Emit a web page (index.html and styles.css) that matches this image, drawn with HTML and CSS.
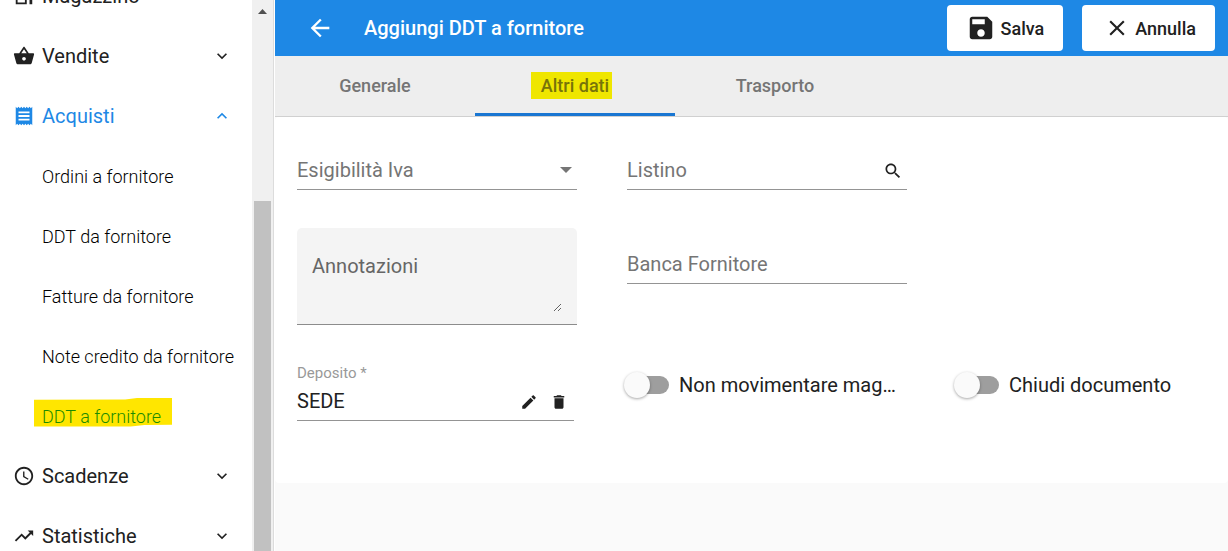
FILE: index.html
```
<!DOCTYPE html>
<html lang="it">
<head>
    <meta charset="UTF-8">
    <meta name="viewport" content="width=device-width, initial-scale=1.0">
    <title>Aggiungi DDT a fornitore</title>
    <link rel="stylesheet" href="styles.css">
</head>
<body>
    <aside class="sidebar">
        <nav class="menu">
            <a href="#" class="menu-item">
                <svg class="icon" viewBox="0 0 24 24"><path d="M3 3h12v18H3zM18 12h3v9h-3zM5 5v14h8V5z" fill-rule="evenodd"/></svg>
                <span>Magazzino</span>
            </a>
            <a href="#" class="menu-item">
                <svg class="icon" viewBox="0 0 24 24"><path d="M17.21 9l-4.38-6.56c-.19-.28-.51-.42-.83-.42-.32 0-.64.14-.83.43L6.79 9H2c-.55 0-1 .45-1 1 0 .09.01.18.04.27l2.54 9.27c.23.84 1 1.46 1.92 1.46h13c.92 0 1.69-.62 1.93-1.46l2.54-9.27L23 10c0-.55-.45-1-1-1h-4.79zM9 9l3-4.4L15 9H9zm3 8c-1.1 0-2-.9-2-2s.9-2 2-2 2 .9 2 2-.9 2-2 2z"/></svg>
                <span>Vendite</span>
                <svg class="chevron" viewBox="0 0 24 24"><path d="M7.41 8.59L12 13.17l4.59-4.58L18 10l-6 6-6-6z"/></svg>
            </a>
            <a href="#" class="menu-item open">
                <svg class="icon" viewBox="0 0 24 24"><path d="M18 17H6v-2h12v2zm0-4H6v-2h12v2zm0-4H6V7h12v2zM3 22l1.500-1.500L6 22l1.500-1.500L9 22l1.500-1.500L12 22l1.500-1.500L15 22l1.500-1.500L18 22l1.500-1.500L21 22V2l-1.500 1.500L18 2l-1.500 1.500L15 2l-1.500 1.500L12 2l-1.500 1.500L9 2 7.500 3.500 6 2 4.500 3.500 3 2v20z"/></svg>
                <span>Acquisti</span>
                <svg class="chevron" viewBox="0 0 24 24"><path d="M7.41 15.41L12 10.83l4.59 4.58L18 14l-6-6-6 6z"/></svg>
            </a>
            <a href="#" class="menu-item sub">Ordini a fornitore</a>
            <a href="#" class="menu-item sub">DDT da fornitore</a>
            <a href="#" class="menu-item sub">Fatture da fornitore</a>
            <a href="#" class="menu-item sub">Note credito da fornitore</a>
            <a href="#" class="menu-item sub current"><span class="marker">DDT a fornitore</span></a>
            <a href="#" class="menu-item">
                <svg class="icon" viewBox="0 0 24 24"><path d="M11.990 2C6.470 2 2 6.480 2 12s4.470 10 9.990 10C17.520 22 22 17.520 22 12S17.520 2 11.990 2zM12 20c-4.420 0-8-3.580-8-8s3.580-8 8-8 8 3.580 8 8-3.580 8-8 8zm.5-13H11v6l5.250 3.150.75-1.230-4.500-2.670z"/></svg>
                <span>Scadenze</span>
                <svg class="chevron" viewBox="0 0 24 24"><path d="M7.41 8.59L12 13.17l4.59-4.58L18 10l-6 6-6-6z"/></svg>
            </a>
            <a href="#" class="menu-item">
                <svg class="icon" viewBox="0 0 24 24"><path d="M16 6l2.290 2.290-4.880 4.880-4-4L2 16.590 3.410 18l6-6 4 4 6.300-6.290L22 12V6z"/></svg>
                <span>Statistiche</span>
                <svg class="chevron" viewBox="0 0 24 24"><path d="M7.41 8.59L12 13.17l4.59-4.58L18 10l-6 6-6-6z"/></svg>
            </a>
        </nav>
        <div class="scrollbar">
            <div class="scroll-arrow"></div>
            <div class="scroll-thumb"></div>
        </div>
    </aside>

    <main class="content">
        <header class="toolbar">
            <button type="button" class="back" aria-label="Indietro">
                <svg viewBox="0 0 24 24"><path d="M20 11H7.830l5.590-5.590L12 4l-8 8 8 8 1.410-1.410L7.830 13H20v-2z"/></svg>
            </button>
            <h1>Aggiungi DDT a fornitore</h1>
            <button type="button" class="action save">
                <svg viewBox="0 0 24 24"><path d="M17 3H5c-1.110 0-2 .9-2 2v14c0 1.100.89 2 2 2h14c1.100 0 2-.9 2-2V7l-4-4zm-5 16c-1.660 0-3-1.340-3-3s1.340-3 3-3 3 1.340 3 3-1.340 3-3 3zm3-10H5V5h10v4z"/></svg>
                Salva
            </button>
            <button type="button" class="action cancel">
                <svg viewBox="0 0 24 24"><path d="M19 6.410L17.590 5 12 10.590 6.410 5 5 6.410 10.590 12 5 17.590 6.410 19 12 13.410 17.590 19 19 17.590 13.410 12z"/></svg>
                Annulla
            </button>
        </header>

        <div class="tabs" role="tablist">
            <button type="button" class="tab" role="tab">Generale</button>
            <button type="button" class="tab active" role="tab" aria-selected="true"><mark>Altri dati</mark></button>
            <button type="button" class="tab" role="tab">Trasporto</button>
        </div>

        <form class="panel">
            <div class="field">
                <div class="line">
                    <select aria-label="Esigibilità Iva">
                        <option>Esigibilità Iva</option>
                    </select>
                    <span class="caret"></span>
                </div>
            </div>
            <div class="field">
                <div class="line">
                    <input type="text" placeholder="Listino" aria-label="Listino">
                    <button type="button" class="tool" aria-label="Cerca">
                        <svg viewBox="0 0 24 24"><path d="M15.500 14h-.79l-.28-.27C15.410 12.590 16 11.110 16 9.500 16 5.910 13.090 3 9.500 3S3 5.910 3 9.500 5.910 16 9.500 16c1.610 0 3.090-.59 4.230-1.570l.27.28v.79l5 4.990L20.490 19l-4.990-5zm-6 0C7.010 14 5 11.990 5 9.500S7.010 5 9.500 5 14 7.010 14 9.500 11.990 14 9.500 14z"/></svg>
                    </button>
                </div>
            </div>

            <div class="notes row-start">
                <textarea placeholder="Annotazioni" aria-label="Annotazioni"></textarea>
            </div>
            <div class="field">
                <div class="line">
                    <input type="text" placeholder="Banca Fornitore" aria-label="Banca Fornitore">
                </div>
            </div>

            <div class="field deposit row-start">
                <label for="deposito">Deposito *</label>
                <div class="line">
                    <input type="text" id="deposito" value="SEDE">
                    <button type="button" class="tool" aria-label="Modifica">
                        <svg viewBox="0 0 24 24"><path d="M3 17.250V21h3.750L17.810 9.940l-3.750-3.750L3 17.250zM20.710 7.040c.39-.39.39-1.020 0-1.410l-2.340-2.340c-.39-.39-1.020-.39-1.410 0l-1.830 1.830 3.750 3.750 1.830-1.830z"/></svg>
                    </button>
                    <button type="button" class="tool" aria-label="Elimina">
                        <svg viewBox="0 0 24 24"><path d="M6 19c0 1.100.9 2 2 2h8c1.100 0 2-.9 2-2V7H6v12zM19 4h-3.500l-1-1h-5l-1 1H5v2h14V4z"/></svg>
                    </button>
                </div>
            </div>
            <label class="toggle">
                <input type="checkbox">
                <span>Non movimentare magazzino</span>
            </label>
            <label class="toggle">
                <input type="checkbox">
                <span>Chiudi documento</span>
            </label>
        </form>
    </main>
</body>
</html>
```
FILE: styles.css
```
* {
    box-sizing: border-box;
}
body {
    margin: 0;
    height: 100vh;
    display: flex;
    overflow: hidden;
    font-family: Roboto, Arial, sans-serif;
    font-size: 20px;
    color: #212121;
    background: #fafafa;
}
button, input, select, textarea {
    font: inherit;
    color: inherit;
    border: none;
    background: none;
    padding: 0;
    margin: 0;
    outline: none;
}
button {
    cursor: pointer;
}
svg {
    fill: currentColor;
    flex: none;
}

/* sidebar */
.sidebar {
    display: flex;
    flex: none;
    width: 275px;
    background: #fff;
}
.menu {
    flex: 1;
    overflow: hidden;
    /* list is scrolled down */
    margin-top: -34px;
}
.menu-item {
    display: flex;
    align-items: center;
    height: 60px;
    padding: 0 20px 0 13px;
    color: #212121;
    text-decoration: none;
}
.menu-item .icon {
    width: 22px;
    height: 22px;
    margin-right: 7px;
}
.menu-item .chevron {
    width: 20px;
    height: 20px;
    margin-left: auto;
}
.menu-item.open {
    color: #1e88e5;
}
.menu-item.sub {
    padding: 0 0 0 42px;
    font-size: 18px;
    font-weight: 300;
    color: #000;
    white-space: nowrap;
}
.menu-item.current {
    color: #1d8c00;
}
.marker {
    position: relative;
    z-index: 0;
}
.marker::before {
    content: "";
    position: absolute;
    z-index: -1;
    inset: -8px -11px 0 -8px;
    background: #ffe600;
    clip-path: polygon(0 8%, 66% 7%, 76% 1%, 100% 0, 100% 94%, 80% 95%, 70% 100%, 0 100%);
}
.scrollbar {
    display: flex;
    flex-direction: column;
    width: 23px;
    padding: 9px 3px 0 2px;
    background: #f0f0f0;
    border-right: 1px solid #fff;
    box-shadow: inset -1px 0 #dcdcdc;
}
.scroll-arrow {
    width: 9px;
    height: 5px;
    margin: 0 auto;
    background: #505050;
    clip-path: polygon(50% 0, 100% 100%, 0 100%);
}
.scroll-thumb {
    flex: 1;
    margin-top: 187px;
    background: #c1c1c1;
}

/* toolbar and tabs */
.content {
    flex: 1;
    min-width: 0;
}
.toolbar {
    display: flex;
    align-items: center;
    height: 56px;
    padding: 0 13px 0 31px;
    background: #1e88e5;
    color: #fff;
}
.toolbar h1 {
    flex: 1;
    margin: 0;
    font-size: 20px;
    font-weight: 500;
}
.back {
    display: flex;
    margin-right: 30px;
}
.back svg {
    width: 28px;
    height: 28px;
}
.action {
    display: flex;
    align-items: center;
    gap: 5px;
    height: 46px;
    border-radius: 4px;
    background: #fff;
    color: #212121;
    font-size: 18px;
    font-weight: 500;
}
.save {
    padding: 0 19px;
    margin-right: 19px;
}
.save svg {
    width: 30px;
    height: 30px;
}
.cancel {
    padding: 0 19px 0 22px;
}
.cancel svg {
    width: 26px;
    height: 26px;
}
.tabs {
    display: flex;
    height: 61px;
    background: #eee;
    border-bottom: 1px solid #d0d0d0;
}
.tab {
    width: 200px;
    padding-top: 2px;
    border-bottom: 3px solid transparent;
    color: #757575;
    font-size: 18px;
    font-weight: 500;
}
.tab.active {
    border-color: #1976d2;
}
.tab mark {
    padding: 3px 3px 3px 10px;
    margin: 0 -3px 0 -10px;
    background: #efe600;
    color: #78740a;
}

/* form */
.panel {
    display: grid;
    grid-template-columns: repeat(2, minmax(0, 280px)) 1fr;
    gap: 38px 50px;
    align-items: start;
    padding: 17px 22px 62px;
    background: #fff;
    border-radius: 4px;
}
.row-start {
    grid-column: 1;
}
.field {
    padding-top: 16px;
}
.line {
    display: flex;
    align-items: center;
    height: 40px;
    border-bottom: 1px solid #949494;
}
.line input, .line select {
    flex: 1;
    min-width: 0;
    height: 100%;
}
.line select {
    appearance: none;
    color: #757575;
}
::placeholder {
    color: #757575;
    opacity: 1;
}
.caret {
    margin-right: 5px;
    border: 6px solid transparent;
    border-top-color: #757575;
    border-bottom: 0;
}
.tool {
    display: flex;
    padding: 2px 6px 0;
}
.tool svg {
    width: 18px;
    height: 18px;
}
.tool:only-of-type svg {
    width: 20px;
    height: 20px;
}
.tool:only-of-type {
    padding-right: 4px;
}
.notes {
    padding: 26px 15px 0;
    height: 97px;
    background: #f4f4f4;
    border-bottom: 1px solid #8c8c8c;
    border-radius: 5px 5px 0 0;
}
.notes textarea {
    display: block;
    width: 100%;
    height: 58px;
    resize: vertical;
}
.notes ::placeholder {
    color: #666;
}
.deposit {
    padding: 0;
    margin-right: 3px;
}
.deposit label {
    display: block;
    height: 18px;
    line-height: 20px;
    font-size: 15px;
    color: #999;
}
.toggle {
    display: flex;
    align-items: center;
    gap: 10px;
    height: 44px;
    min-width: 0;
    padding-right: 8px;
    cursor: pointer;
}
.toggle span {
    overflow: hidden;
    text-overflow: ellipsis;
    white-space: nowrap;
}
.toggle input {
    appearance: none;
    flex: none;
    display: flex;
    align-items: center;
    width: 42px;
    height: 18px;
    border-radius: 9px;
    background: #9e9e9e;
}
.toggle input::before {
    content: "";
    width: 26px;
    height: 26px;
    margin-left: -3px;
    flex: none;
    border-radius: 50%;
    background: #fafafa;
    box-shadow: 0 1px 3px rgba(0, 0, 0, 0.35);
}
.toggle input:checked::before {
    margin-left: 19px;
}
```
